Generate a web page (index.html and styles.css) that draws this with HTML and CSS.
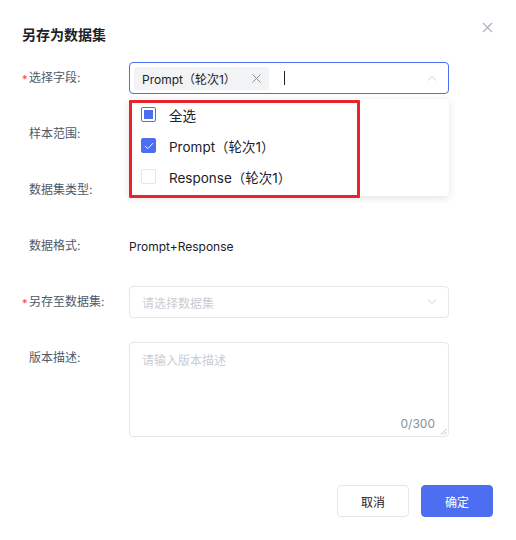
FILE: index.html
```html
<!DOCTYPE html>
<html lang="zh-CN">
<head>
<meta charset="utf-8">
<title>另存为数据集</title>
<link rel="stylesheet" href="styles.css">
</head>
<body>
<div class="modal">
  <div class="modal-header">
    <h2 class="modal-title">另存为数据集</h2>
    <button class="modal-close" aria-label="关闭">
      <svg width="11" height="11" viewBox="0 0 11 11"><path d="M1 1L10 10M10 1L1 10" stroke="#a9aeb8" stroke-width="1.1" fill="none"/></svg>
    </button>
  </div>

  <form class="form">
    <div class="row">
      <label class="label required">选择字段:</label>
      <div class="control">
        <div class="select select-open">
          <span class="tag">Prompt（轮次1）
            <svg class="tag-x" width="9" height="9" viewBox="0 0 9 9"><path d="M0.5 0.5L8.5 8.5M8.5 0.5L0.5 8.5" stroke="#86909c" stroke-width="1" fill="none"/></svg>
          </span>
          <span class="caret"></span>
          <svg class="arrow" width="10" height="6" viewBox="0 0 10 6"><path d="M1 5.5L5 1.5L9 5.5" stroke="#c9cdd4" stroke-width="1" fill="none"/></svg>
        </div>
        <div class="dropdown">
          <div class="option">
            <span class="checkbox indeterminate"></span>
            <span>全选</span>
          </div>
          <div class="option">
            <span class="checkbox checked">
              <svg width="10" height="8" viewBox="0 0 10 8"><path d="M1 4L3.8 6.6L9 1.2" stroke="#fff" stroke-width="1" fill="none"/></svg>
            </span>
            <span>Prompt（轮次1）</span>
          </div>
          <div class="option">
            <span class="checkbox"></span>
            <span>Response（轮次1）</span>
          </div>
          <div class="highlight"></div>
        </div>
      </div>
    </div>

    <div class="row">
      <label class="label">样本范围:</label>
      <div class="control"></div>
    </div>

    <div class="row">
      <label class="label">数据集类型:</label>
      <div class="control"></div>
    </div>

    <div class="row">
      <label class="label">数据格式:</label>
      <div class="control value">Prompt+Response</div>
    </div>

    <div class="row">
      <label class="label required">另存至数据集:</label>
      <div class="control">
        <div class="select">
          <span class="placeholder">请选择数据集</span>
          <svg class="arrow" width="10" height="6" viewBox="0 0 10 6"><path d="M1 0.5L5 4.5L9 0.5" stroke="#c9cdd4" stroke-width="1" fill="none"/></svg>
        </div>
      </div>
    </div>

    <div class="row row-top">
      <label class="label">版本描述:</label>
      <div class="control">
        <div class="textarea">
          <span class="placeholder">请输入版本描述</span>
          <span class="count">0/300</span>
          <svg class="resize" width="7" height="7" viewBox="0 0 7 7"><path d="M6.5 1L1 6.5M6.5 4L4 6.5" stroke="#a9aeb8" stroke-width="0.8" fill="none"/></svg>
        </div>
      </div>
    </div>
  </form>

  <div class="footer">
    <button class="btn">取消</button>
    <button class="btn btn-primary">确定</button>
  </div>
</div>
</body>
</html>
```

FILE: styles.css
```css
* { box-sizing: border-box; }

html, body {
  margin: 0;
  background: #fff;
}

body {
  font-family: Inter, "Noto Sans CJK SC", sans-serif;
  color: #1d2129;
}

.modal {
  width: 516px;
  height: 540px;
  padding: 25px 22px 0 22px;
  background: #fff;
}

.modal-header {
  display: flex;
  justify-content: space-between;
  align-items: flex-start;
  height: 20px;
}

.modal-title {
  margin: 0;
  font-size: 14px;
  font-weight: 600;
  line-height: 20px;
  color: #1d2129;
}

.modal-close {
  border: 0;
  background: none;
  padding: 0;
  margin: -3px 1px 0 0;
  width: 11px;
  height: 11px;
  display: flex;
}

.form {
  margin-top: 17px;
}

.row {
  display: grid;
  grid-template-columns: 107px 320px;
  align-items: center;
  height: 32px;
  margin-bottom: 24px;
}

.row-top {
  align-items: start;
  height: 96px;
}

.row-top .label {
  line-height: 32px;
}

.label {
  position: relative;
  padding-left: 7px;
  font-size: 12px;
  color: #4e5969;
  line-height: 32px;
}

.label.required::before {
  content: "*";
  position: absolute;
  left: 0;
  top: 1px;
  color: #f53f3f;
  font-size: 11px;
}

.control {
  position: relative;
  height: 100%;
}

.value {
  display: flex;
  align-items: center;
  font-size: 12px;
  color: #1d2129;
}

.select {
  position: relative;
  display: flex;
  align-items: center;
  height: 32px;
  padding: 0 4px;
  border: 1px solid #e5e6eb;
  border-radius: 4px;
  background: #fff;
}

.select-open {
  border-color: #4e6ef2;
  height: 32px;
}

.tag {
  display: inline-flex;
  align-items: center;
  height: 23px;
  padding: 0 8px 0 8px;
  background: #f2f3f5;
  border-radius: 2px;
  font-size: 12px;
  color: #1d2129;
  white-space: nowrap;
}

.tag-x {
  margin-left: 16px;
}

.caret {
  width: 1px;
  height: 14px;
  background: #1d2129;
  margin-left: 15px;
}

.arrow {
  position: absolute;
  right: 11px;
  top: 50%;
  margin-top: -3px;
}

.placeholder {
  font-size: 12px;
  color: #c9cdd4;
  padding-left: 8px;
}

.dropdown {
  position: absolute;
  top: 37px;
  left: 0;
  width: 320px;
  padding: 0 0 4px;
  background: #fff;
  border-radius: 4px;
  box-shadow: 0 2px 8px rgba(0, 0, 0, 0.12);
  z-index: 5;
}

.option {
  display: flex;
  align-items: center;
  height: 31px;
  padding-left: 12px;
  font-size: 13.5px;
  color: #1d2129;
}

.checkbox {
  width: 15px;
  height: 15px;
  margin-right: 13px;
  border: 1px solid #e5e6eb;
  border-radius: 2px;
  display: inline-flex;
  align-items: center;
  justify-content: center;
  background: #fff;
  flex: none;
}

.checkbox.indeterminate {
  border-color: #4e6ef2;
}

.checkbox.indeterminate::after {
  content: "";
  width: 9px;
  height: 9px;
  background: #4e6ef2;
}

.checkbox.checked {
  background: #4e6ef2;
  border-color: #4e6ef2;
}

.highlight {
  position: absolute;
  left: 0;
  top: 1px;
  width: 231px;
  height: 98px;
  border: 3px solid #e8232b;
  border-radius: 1px;
  pointer-events: none;
}

.textarea {
  position: relative;
  height: 95px;
  border: 1px solid #e5e6eb;
  border-radius: 4px;
  padding-top: 6px;
  padding-left: 4px;
}

.textarea .placeholder {
  line-height: 16px;
}

.count {
  position: absolute;
  right: 13px;
  bottom: 5px;
  font-size: 12px;
  color: #86909c;
}

.resize {
  position: absolute;
  right: 1px;
  bottom: 1px;
}

.footer {
  display: flex;
  justify-content: flex-end;
  gap: 12px;
  margin-top: 47px;
  padding-right: 1px;
}

.btn {
  width: 72px;
  height: 32px;
  border: 1px solid #e5e6eb;
  border-radius: 4px;
  background: #fff;
  font-family: inherit;
  font-size: 12px;
  color: #1d2129;
  padding: 0;
}

.btn-primary {
  background: #4e6ef2;
  border-color: #4e6ef2;
  color: #fff;
}
```
